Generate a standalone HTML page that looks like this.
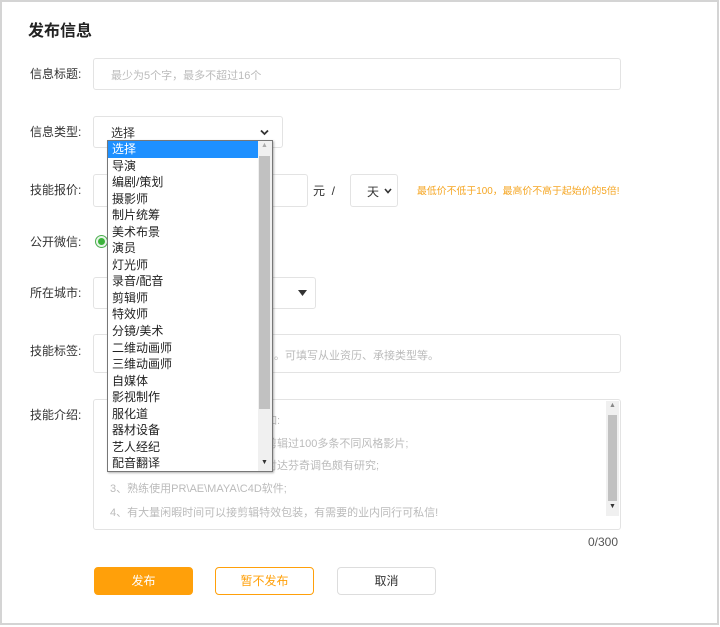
<!DOCTYPE html>
<html><head><meta charset="utf-8"><style>
*{box-sizing:border-box;margin:0;padding:0}
body{width:720px;height:627px;background:#fff;font-family:"Liberation Sans","Noto Sans CJK SC",sans-serif;position:relative;overflow:hidden;color:#333}
.frame{position:absolute;left:0;top:0;width:719px;height:625px;border:2px solid #d4d4d4}
.a{position:absolute;white-space:nowrap}
.lbl{position:absolute;left:30px;font-size:12px;color:#333;line-height:16px}
.box{position:absolute;border:1px solid #e3e3e3;border-radius:3px;background:#fff}
.ph{color:#bbb;font-size:11px}
.dd{position:absolute;left:107px;top:140px;width:166px;height:332px;border:1px solid #777;background:#fff;box-shadow:1px 1px 2px rgba(0,0,0,.3)}
.dd div.it{height:16.55px;line-height:16.55px;font-size:12px;padding-left:4px;color:#222}
.dd div.sel{background:#1e90ff;color:#fff;margin-right:14px}
.sb{position:absolute;right:0;top:0;width:14px;height:100%;background:#f0f0f0}
.btn{position:absolute;top:567px;height:28px;width:99px;border-radius:4px;font-size:12px;text-align:center;line-height:26px}
</style></head><body>
<div class="frame"></div>
<div class="a" style="left:28px;top:17px;font-size:16px;font-weight:bold;color:#222">发布信息</div>

<div class="lbl" style="top:66px">信息标题:</div>
<div class="box" style="left:93px;top:58px;width:528px;height:32px"><span class="a ph" style="left:17px;top:8px">最少为5个字，最多不超过16个</span></div>

<div class="lbl" style="top:124px">信息类型:</div>
<div class="box" style="left:93px;top:116px;width:190px;height:32px"><span class="a" style="left:17px;top:7px;font-size:12px">选择</span><svg class="a" style="left:166px;top:12px" width="9" height="7" viewBox="0 0 9 7"><path d="M1 1.5L4.5 5L8 1.5" stroke="#333" stroke-width="1.8" fill="none"/></svg></div>

<div class="lbl" style="top:182px">技能报价:</div>
<div class="box" style="left:93px;top:174px;width:215px;height:33px"></div>
<div class="a" style="left:313px;top:182px;font-size:12px">元 &nbsp;/</div>
<div class="box" style="left:350px;top:174px;width:48px;height:33px"><span class="a" style="left:16px;top:8px;font-size:12px">天</span><svg class="a" style="left:33px;top:13px" width="8" height="6" viewBox="0 0 8 6"><path d="M1 1L4 4.5L7 1" stroke="#333" stroke-width="1.6" fill="none"/></svg></div>
<div class="a" style="left:417px;top:183px;font-size:9.9px;color:#f5a623">最低价不低于100，最高价不高于起始价的5倍!</div>

<div class="lbl" style="top:234px">公开微信:</div>
<div class="a" style="left:95px;top:235px;width:13px;height:13px;border-radius:50%;border:1px solid #4caf50;background:#e8f5e9"><div style="position:absolute;left:2px;top:2px;width:7px;height:7px;border-radius:50%;background:#3bb33b"></div></div>

<div class="lbl" style="top:285px">所在城市:</div>
<div class="box" style="left:93px;top:277px;width:223px;height:32px"><svg class="a" style="left:204px;top:12px" width="9" height="6" viewBox="0 0 9 6"><path d="M0 0H9L4.5 6Z" fill="#333"/></svg></div>

<div class="lbl" style="top:343px">技能标签:</div>
<div class="box" style="left:93px;top:334px;width:528px;height:39px"><span class="a ph" style="left:180px;top:12px">。可填写从业资历、承接类型等。</span></div>

<div class="lbl" style="top:407px">技能介绍:</div>
<div class="box" style="left:93px;top:399px;width:528px;height:131px">
<span class="a ph" style="left:172px;top:12px">如:</span>
<span class="a ph" style="left:172px;top:35px">剪辑过100多条不同风格影片;</span>
<span class="a ph" style="left:172px;top:57px">对达芬奇调色颇有研究;</span>
<span class="a ph" style="left:16px;top:80px">3、熟练使用PR\AE\MAYA\C4D软件;</span>
<span class="a ph" style="left:16px;top:104px">4、有大量闲暇时间可以接剪辑特效包装，有需要的业内同行可私信!</span>
<div class="a" style="left:512px;top:1px;width:13px;height:115px;background:#f0f0f0"><div style="position:absolute;left:2px;top:14px;width:9px;height:86px;background:#c1c1c1"></div><span class="a" style="left:3px;top:1px;font-size:7px;color:#888">▲</span><span class="a" style="left:3px;top:102px;font-size:7px;color:#333">▼</span></div>
</div>
<div class="a" style="left:588px;top:535px;font-size:12px;color:#555">0/300</div>

<div class="btn" style="left:94px;background:#ffa00a;color:#fff;border:1px solid #ffa00a">发布</div>
<div class="btn" style="left:215px;border:1px solid #ffa00a;color:#ffa00a">暂不发布</div>
<div class="btn" style="left:337px;border:1px solid #ddd;color:#333">取消</div>

<div class="dd">
<div class="sb"><div style="position:absolute;left:1px;top:15px;width:11px;height:253px;background:#c1c1c1"></div><span class="a" style="left:3px;top:1px;font-size:7px;color:#aaa">▲</span><span class="a" style="left:3px;top:318px;font-size:7px;color:#333">▼</span></div>
<div class="it sel">选择</div><div class="it">导演</div><div class="it">编剧/策划</div><div class="it">摄影师</div><div class="it">制片统筹</div><div class="it">美术布景</div><div class="it">演员</div><div class="it">灯光师</div><div class="it">录音/配音</div><div class="it">剪辑师</div><div class="it">特效师</div><div class="it">分镜/美术</div><div class="it">二维动画师</div><div class="it">三维动画师</div><div class="it">自媒体</div><div class="it">影视制作</div><div class="it">服化道</div><div class="it">器材设备</div><div class="it">艺人经纪</div><div class="it">配音翻译</div>
</div>
</body></html>
